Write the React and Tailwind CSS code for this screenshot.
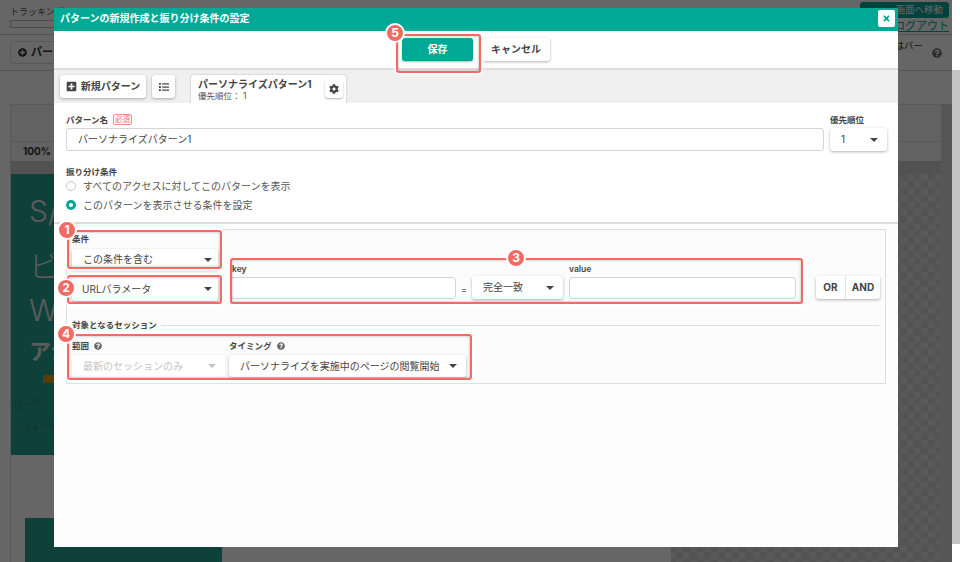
import React from "react";
import { FaPlusSquare, FaCog, FaQuestionCircle, FaTimes, FaPlusCircle, FaList } from "react-icons/fa";

const jp = "font-['Inter','Noto_Sans_CJK_JP',sans-serif]";

const Caret = ({ className = "" }) => (
  <svg width="8" height="4" viewBox="0 0 8 4" className={`shrink-0 ${className}`}>
    <path d="M0 0h8L4 4z" fill="currentColor" />
  </svg>
);

const Select = ({ label, className = "", disabled }) => (
  <div
    className={`flex items-center justify-between rounded-[3px] bg-white text-[10px] whitespace-nowrap ${
      disabled ? "text-[#c4c4c4] shadow-[0_0_2px_rgba(0,0,0,0.12)]" : "text-[#444] shadow-[0_1px_3px_rgba(0,0,0,0.3)]"
    } ${className}`}
  >
    <span>{label}</span>
    <Caret className={disabled ? "text-[#c4c4c4]" : "text-[#444]"} />
  </div>
);

const Input = ({ className = "", children }) => (
  <div
    className={`flex items-center rounded-[3px] border border-[#d4d4d4] bg-white text-[10px] text-[#444] ${className}`}
  >
    {children}
  </div>
);

const Label = ({ children, className = "" }) => (
  <div className={`text-[8.5px] leading-[12px] font-bold text-[#444] ${className}`}>{children}</div>
);

const Radio = ({ checked, children }) => (
  <div className="flex items-center gap-[7px] text-[10px] leading-[14px] text-[#555]">
    {checked ? (
      <span className="flex h-[10px] w-[10px] items-center justify-center rounded-full bg-[#00a896]">
        <span className="h-[4px] w-[4px] rounded-full bg-white" />
      </span>
    ) : (
      <span className="h-[10px] w-[10px] rounded-full border border-[#c8c8c8] bg-white" />
    )}
    {children}
  </div>
);

const Mark = ({ n, className }) => (
  <div
    className={`absolute flex h-[20px] w-[20px] items-center justify-center rounded-full border-2 border-white bg-[#f26b63] text-[12px] font-bold text-white ${className}`}
  >
    {n}
  </div>
);

// 赤い注釈枠
const Frame = ({ className }) => (
  <div
    className={`pointer-events-none absolute rounded-[3px] border-2 border-[#f26b63] shadow-[0_0_0_1.5px_#fff,0_0_4px_1px_rgba(255,255,255,0.8),inset_0_0_3px_rgba(0,0,0,0.3)] ${className}`}
  />
);

const PageBehind = () => (
  <div className="flex h-full w-[952px] flex-col bg-white text-[#222]">
    <div className="flex h-[35px] justify-between border-b border-[#ccc] pl-[10px] pr-[3px]">
      <div className="pt-[3px]">
        <div className="pt-[3px] text-[9px] leading-[12px] text-[#555]">トラッキング</div>
        <div className="mt-[2px] h-[8px] w-[50px] border border-[#bbb]" />
      </div>
      <div className="flex flex-col items-end pt-[2px]">
        <div className="flex h-[17px] w-[89px] items-center justify-end rounded-[3px] bg-[#00a896] pr-[6px] text-[9.5px] text-white">
          画面へ移動
        </div>
        <div className="mt-[1px] text-[11px] leading-[15px] text-[#00a896] underline">ログアウト</div>
      </div>
    </div>
    <div className="flex h-[36px] items-center justify-between border-b border-[#ccc] pl-[10px] pr-[10px]">
      <div className="flex h-[23px] w-[70px] items-center gap-1 rounded-[3px] border border-[#ddd] px-[7px] text-[11px] font-bold text-[#333]">
        <FaPlusCircle size={9} />
        パーソ
      </div>
      <div className="flex items-start gap-[9px] text-[9.5px] leading-[12px] text-[#333]">
        <span className="-mt-[8px]">はバー</span>
        <FaQuestionCircle size={10} className="text-[#777]" />
      </div>
    </div>
    <div className="mt-[33px] flex flex-1 overflow-hidden pl-[10px]">
      <div className="flex w-[932px] flex-col border-x border-t border-[#ddd]">
        <div className="h-[37px] shrink-0 border-b border-[#ddd] bg-[#f4f4f4]" />
        <div className="flex h-[19px] shrink-0 items-center gap-1 bg-[#f4f4f4] pl-[12px] text-[10px] font-bold text-[#333]">
          100%
          <Caret />
        </div>
        <div className="h-[13px] shrink-0 bg-[#ccc]" />
        <div className="flex flex-1 bg-[conic-gradient(#cfcfcf_25%,#dedede_0_50%,#cfcfcf_0_75%,#dedede_0)] bg-[length:14px_14px]">
          <div className="w-[660px]">
            <div className="h-[281px] overflow-hidden bg-[#27a091] pt-[20px] text-[#e4e4e4]">
              <div className="pl-[18px] text-[30px] leading-[34px] font-light">S/</div>
              <div className="mt-[16px] pl-[18px] text-[30px] leading-[44px] font-light">ビ</div>
              <div className="pl-[18px] text-[30px] leading-[44px] font-light">WE</div>
              <div className="mt-[4px] pl-[18px] text-[22px] leading-[30px] font-bold">アシ</div>
              <div className="mt-[9px] ml-[32px] h-[8px] w-[30px] bg-[#e09a10]" />
              <div className="mt-[18px] flex flex-col gap-[14px] pl-[3px] text-[9px] leading-[12px] text-[#1b8074]">
                <span className="origin-left -rotate-[14deg]">ゴール</span>
                <span className="origin-left -rotate-[14deg] pl-[8px]">フォーム</span>
              </div>
            </div>
            <div className="h-full bg-white pt-[63px] pl-[14px]">
              <div className="h-[60px] w-[197px] bg-[#27a091]" />
            </div>
          </div>
        </div>
      </div>
      <div className="w-[10px] bg-[#d8d8d8]" />
    </div>
  </div>
);

const App = () => {
  return (
    <div className={`relative h-[562px] w-[960px] overflow-hidden bg-white ${jp}`}>
      <PageBehind />
      <div className="absolute top-[70px] right-0 bottom-[18px] w-[8px] bg-[#c4c4c4]" />
      <div className="absolute top-0 bottom-0 left-0 w-[952px] bg-black/60" />

      {/* modal */}
      <div className="absolute top-[8px] left-[54px] flex h-[539px] w-[844px] flex-col bg-[#fdfdfd]">
        <div className="flex h-[23px] shrink-0 items-start justify-between bg-[#00a896] pr-[3px] pl-[6px]">
          <span className="text-[10px] leading-[21px] font-bold text-white">パターンの新規作成と振り分け条件の設定</span>
          <span className="mt-[2px] flex h-[17px] w-[17px] items-center justify-center rounded-[2px] bg-white text-[#00a896]">
            <FaTimes size={9} />
          </span>
        </div>

        <div className="flex h-[39px] shrink-0 items-center justify-center gap-[9px] border-b-2 border-[#dcdcdc] bg-white px-[1px]">
          <button className="h-[23px] w-[71px] rounded-[3px] bg-[#00a896] text-[10px] font-bold text-white shadow-[0_1px_2px_rgba(0,0,0,0.3)]">
            保存
          </button>
          <button className="h-[23px] w-[68px] rounded-[3px] bg-white text-[10px] font-bold text-[#444] shadow-[0_1px_3px_rgba(0,0,0,0.3)]">
            キャンセル
          </button>
        </div>

        <div className="flex h-[33px] shrink-0 items-end bg-[#f0f0f0] pl-[6px]">
          <div className="mb-[5px] flex gap-[6px]">
            <button className="flex h-[23px] w-[86px] items-center justify-center gap-[4px] rounded-[3px] bg-white text-[10px] font-bold text-[#444] shadow-[0_1px_3px_rgba(0,0,0,0.3)]">
              <FaPlusSquare size={11} />
              新規パターン
            </button>
            <button className="flex h-[23px] w-[23px] items-center justify-center rounded-[3px] bg-white text-[#444] shadow-[0_1px_3px_rgba(0,0,0,0.3)]">
              <FaList size={10} />
            </button>
          </div>
          <div className="ml-[16px] flex h-[28px] w-[155px] items-center justify-between rounded-t-[3px] bg-white pr-[3px] pl-[7px] shadow-[0_0_2px_rgba(0,0,0,0.3)]">
            <div>
              <div className="text-[10px] leading-[14px] font-bold text-[#444]">パーソナライズパターン1</div>
              <div className="text-[8.5px] leading-[11px] text-[#555]">優先順位： 1</div>
            </div>
            <span className="flex h-[18px] w-[18px] items-center justify-center rounded-[3px] bg-white text-[#444] shadow-[0_1px_2px_rgba(0,0,0,0.3)]">
              <FaCog size={10} />
            </span>
          </div>
        </div>

        <div className="h-[121px] shrink-0 border-b-2 border-[#dcdcdc] bg-white px-[12px] pt-[9px]">
          <div className="-mr-[1px] flex gap-[6px]">
            <div className="flex-1">
              <div className="flex h-[15px] items-center gap-[5px]">
                <Label>パターン名</Label>
                <span className="rounded-[2px] border border-[#f58a8a] px-[1px] text-[7.5px] leading-[9px] text-[#f06a6a]">
                  必須
                </span>
              </div>
              <Input className="mt-[1px] h-[23px] pl-[11px]">パーソナライズパターン1</Input>
            </div>
            <div className="w-[57px]">
              <Label className="flex h-[15px] items-center">優先順位</Label>
              <Select label="1" className="mt-[1px] h-[23px] pr-[9px] pl-[11px]" />
            </div>
          </div>
          <Label className="mt-[15px]">振り分け条件</Label>
          <div className="mt-[1px] flex flex-col gap-[5px]">
            <Radio>すべてのアクセスに対してこのパターンを表示</Radio>
            <Radio checked>このパターンを表示させる条件を設定</Radio>
          </div>
        </div>

        <div className="mx-[12px] mt-[5px] h-[155px] border border-[#dedede] bg-[#fcfcfc] px-[5px] pt-[3px]">
          <div className="flex">
            <div className="flex w-[147px] flex-col">
              <Label>条件</Label>
              <Select label="この条件を含む" className="mt-[4px] h-[21px] pr-[6px] pl-[11px]" />
              <Select label="URLパラメータ" className="mt-[7px] h-[24px] pr-[6px] pl-[10px]" />
            </div>
            <div className="mt-[30px] ml-[13px] flex">
              <div className="w-[225px]">
                <Label className="pl-[1px] font-semibold">key</Label>
                <Input className="mt-[2px] h-[22px]" />
              </div>
              <span className="mt-[20px] w-[16px] text-center text-[9px] text-[#555]">=</span>
              <div className="mt-[13px]">
                <Select label="完全一致" className="h-[23px] w-[91px] pr-[9px] pl-[11px]" />
              </div>
              <div className="ml-[6px] w-[227px]">
                <Label className="font-semibold">value</Label>
                <Input className="mt-[2px] h-[22px]" />
              </div>
              <div className="mt-[13px] ml-[20px] flex h-[23px] w-[64px] rounded-[3px] bg-white text-[10px] font-bold text-[#444] shadow-[0_1px_3px_rgba(0,0,0,0.3)]">
                <span className="flex w-[30px] items-center justify-center border-r border-[#e4e4e4]">OR</span>
                <span className="flex flex-1 items-center justify-center">AND</span>
              </div>
            </div>
          </div>

          <div className="mt-[18px] flex items-center gap-[4px]">
            <Label className="whitespace-nowrap">対象となるセッション</Label>
            <div className="mr-[1px] h-[1px] flex-1 bg-[#dcdcdc]" />
          </div>

          <div className="mt-[9px] flex gap-[4px]">
            <div className="w-[153px]">
              <Label className="flex items-center gap-[5px]">
                範囲
                <FaQuestionCircle size={8} className="text-[#666]" />
              </Label>
              <Select disabled label="最新のセッションのみ" className="mt-[3px] h-[22px] pr-[9px] pl-[11px]" />
            </div>
            <div className="w-[237px]">
              <Label className="flex items-center gap-[5px]">
                タイミング
                <FaQuestionCircle size={8} className="text-[#666]" />
              </Label>
              <Select
                label="パーソナライズを実施中のページの閲覧開始"
                className="mt-[3px] h-[22px] pr-[9px] pl-[11px]"
              />
            </div>
          </div>
        </div>
      </div>

      {/* annotations */}
      <Frame className="top-[230px] left-[67px] h-[39px] w-[155px]" />
      <Frame className="top-[275px] left-[67px] h-[29px] w-[155px]" />
      <Frame className="top-[258px] left-[230px] h-[46px] w-[573px]" />
      <Frame className="top-[334px] left-[67px] h-[46px] w-[405px]" />
      <Frame className="top-[34px] left-[396px] h-[39px] w-[85px]" />
      <Mark n="1" className="top-[220px] left-[57px]" />
      <Mark n="2" className="top-[278px] left-[56px]" />
      <Mark n="3" className="top-[248px] left-[506px]" />
      <Mark n="4" className="top-[324px] left-[56px]" />
      <Mark n="5" className="top-[23px] left-[385px]" />
    </div>
  );
};

export default App;
